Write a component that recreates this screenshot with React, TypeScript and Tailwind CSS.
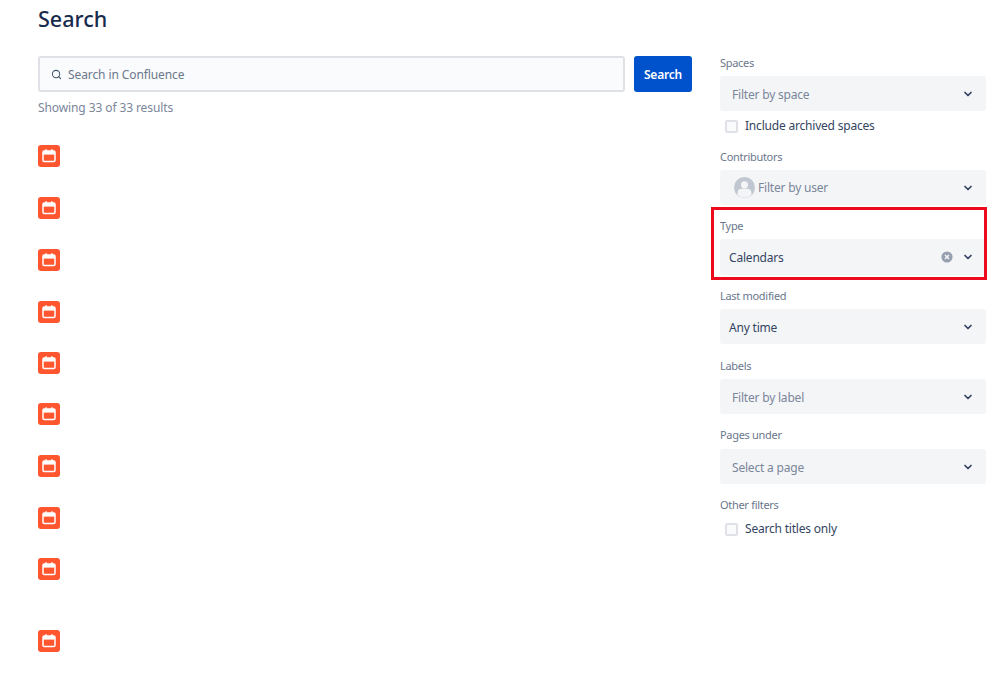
import { ChevronDown, Search } from "lucide-react";

const iconGaps = ["mt-[28px]", "mt-[30px]", "mt-[30px]", "mt-[30px]", "mt-[29px]", "mt-[29px]", "mt-[30px]", "mt-[30px]", "mt-[29px]", "mt-[50px]"];

function CalendarIcon({ className }: { className: string }) {
  return (
    <div className={`flex h-[22px] w-[22px] items-center justify-center rounded-[3px] bg-[#ff5630] ${className}`}>
      <svg width="16" height="16" viewBox="0 0 16 16" fill="none">
        <rect x="2" y="3" width="12" height="10.5" rx="1.2" stroke="#fff" strokeWidth="1.5" />
        <rect x="2" y="3" width="12" height="3.6" fill="#fff" />
        <rect x="4.4" y="1.2" width="1.4" height="2" fill="#fff" />
        <rect x="10.2" y="1.2" width="1.4" height="2" fill="#fff" />
      </svg>
    </div>
  );
}

function Chevron() {
  return <ChevronDown size={12} strokeWidth={3.5} className="text-[#344563]" />;
}

function Filter({ label, value, placeholder, mt, gap = "mt-[4px]" }: { label: string; value?: string; placeholder?: string; mt: string; gap?: string }) {
  return (
    <div className={mt}>
      <div className="h-[18px] text-[11px] leading-[18px] tracking-[-0.3px] text-[#6b778c]">{label}</div>
      <div className={`${gap} flex h-[35px] items-center justify-between rounded-[3px] bg-[#f4f5f7] pl-[9px] pr-[12px] text-[12px] tracking-[-0.2px]`}>
        {value ? <span className="pt-[2px] text-[#344563]">{value}</span> : <span className="pl-[3px] pt-[2px] text-[#7a869a]">{placeholder}</span>}
        <Chevron />
      </div>
    </div>
  );
}

function Check({ label, mt }: { label: string; mt: string }) {
  return (
    <div className={`flex items-center pl-[5px] ${mt}`}>
      <div className="h-[13px] w-[13px] rounded-[2px] border-2 border-[#dfe1e6] bg-[#fafbfc]" />
      <span className="ml-[7px] text-[12px] leading-[18px] tracking-[-0.2px] text-[#344563]">{label}</span>
    </div>
  );
}

export default function App() {
  return (
    <div className="relative h-[678px] w-[999px] overflow-hidden bg-white font-['Noto_Sans',sans-serif]">
      <div className="flex pl-[38px]">
        {/* Results */}
        <div className="w-[654px]">
          <h1 className="mt-[4px] h-[30px] text-[21.5px] font-medium leading-[30px] text-[#172b4d]">Search</h1>
          <div className="mt-[22px] flex justify-between">
            <div className="flex h-[36px] w-[587px] items-center rounded-[3px] border-2 border-[#dfe1e6] bg-[#fafbfc] pl-[11px]">
              <Search size={11} strokeWidth={2.2} className="text-[#42526e]" />
              <span className="ml-[6px] pt-[1px] text-[12px] tracking-[-0.1px] text-[#6b778c]">Search in Confluence</span>
            </div>
            <button className="h-[36px] w-[58px] rounded-[3px] bg-[#0052cc] pt-[1px] text-[12px] font-semibold tracking-[-0.2px] text-white">Search</button>
          </div>
          <p className="mt-[7px] h-[18px] text-[12px] leading-[18px] tracking-[-0.1px] text-[#7a869a]">Showing 33 of 33 results</p>
          {iconGaps.map((gap, i) => (
            <CalendarIcon key={i} className={gap} />
          ))}
        </div>

        {/* Filters */}
        <div className="ml-[28px] w-[266px]">
          <Filter label="Spaces" placeholder="Filter by space" mt="mt-[54px]" />
          <Check label="Include archived spaces" mt="mt-[6px]" />
          <div className="mt-[13px]">
            <div className="h-[18px] text-[11px] leading-[18px] tracking-[-0.3px] text-[#6b778c]">Contributors</div>
            <div className="mt-[4px] flex h-[35px] items-center justify-between rounded-[3px] bg-[#f4f5f7] pl-[14px] pr-[12px] text-[12px] tracking-[-0.2px]">
              <div className="flex items-center">
                <svg width="21" height="21" viewBox="0 0 21 21">
                  <circle cx="10.5" cy="10.5" r="10.5" fill="#c1c7d0" />
                  <circle cx="10.5" cy="7.8" r="3.6" fill="#f4f5f7" />
                  <path d="M3.6 18v-2.6c0-2.2 2-3.6 4-3.6h5.8c2 0 4 1.4 4 3.6V18a10 10 0 0 1-13.8 0z" fill="#f4f5f7" />
                </svg>
                <span className="ml-[3px] pt-[1px] text-[#7a869a]">Filter by user</span>
              </div>
              <Chevron />
            </div>
          </div>
          <div className="mt-[12px]">
            <div className="h-[18px] text-[11px] leading-[18px] tracking-[-0.3px] text-[#6b778c]">Type</div>
            <div className="mt-[4px] flex h-[36px] items-center justify-between rounded-[3px] bg-[#f4f5f7] pl-[9px] pr-[12px] text-[12px] tracking-[-0.2px]">
              <span className="pt-[1px] text-[#344563]">Calendars</span>
              <div className="flex items-center gap-[9px]">
                <svg width="12" height="12" viewBox="0 0 12 12">
                  <circle cx="6" cy="6" r="5.6" fill="#97a0af" />
                  <path d="M4 4l4 4M8 4l-4 4" stroke="#f4f5f7" strokeWidth="1.5" />
                </svg>
                <Chevron />
              </div>
            </div>
          </div>
          <Filter label="Last modified" value="Any time" mt="mt-[12px]" />
          <Filter label="Labels" placeholder="Filter by label" mt="mt-[13px]" />
          <Filter label="Pages under" placeholder="Select a page" mt="mt-[12px]" gap="mt-[5px]" />
          <div className="mt-[12px] h-[18px] text-[11px] leading-[18px] tracking-[-0.3px] text-[#6b778c]">Other filters</div>
          <Check label="Search titles only" mt="mt-[6px]" />
        </div>
      </div>

      {/* Highlight drawn over the Type filter */}
      <div className="absolute left-[711px] top-[207px] h-[73px] w-[276px] border-[3px] border-[#ec0a1e]" />
    </div>
  );
}
